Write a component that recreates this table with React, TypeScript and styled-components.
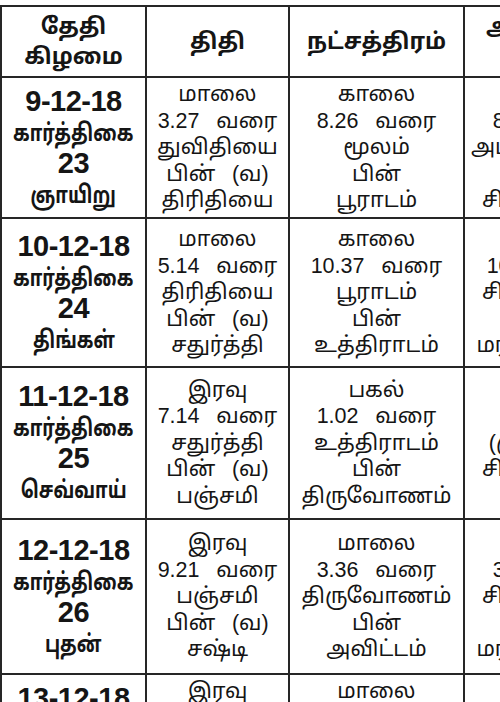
import React from "react";
import styled, { createGlobalStyle } from "styled-components";

const Global = createGlobalStyle`
  html, body { margin: 0; padding: 0; background: #ffffff; }
  body { font-family: "Liberation Sans", "Noto Sans Tamil", "Lohit Tamil", sans-serif; color: #151515; }
`;

const Sheet = styled.div`
  width: 500px;
  height: 702px;
  overflow: hidden;
  padding-top: 5px;
  box-sizing: border-box;
  background: #ffffff;
`;

const Grid = styled.div`
  display: grid;
  grid-template-columns: 143px 141px 173px 175px;
  gap: 2px;
  padding: 2px;
  width: max-content;
  background: #262626;
`;

const Cell = styled.div<{ $h: number }>`
  height: ${(p) => p.$h}px;
  background: #ffffff;
  display: flex;
  flex-direction: column;
  align-items: center;
  justify-content: center;
  text-align: center;
  white-space: nowrap;
  overflow: hidden;
`;

const HeadLine = styled.div`
  font-weight: 700;
  font-size: 22.5px;
  line-height: 30px;
`;

const DateNum = styled.div`
  font-family: "Liberation Sans", sans-serif;
  font-weight: 700;
  font-size: 29px;
  line-height: 31px;
  letter-spacing: -0.5px;
`;

const DateLine = styled.div`
  font-weight: 700;
  font-size: 24px;
  line-height: 31px;
  transform: scaleX(0.76);
`;

const InfoLine = styled.div`
  font-size: 21.5px;
  line-height: 26.5px;
  min-height: 26.5px;
  word-spacing: 0.5em;
`;

type Row = {
  h: number;
  date: [string, string, string, string];
  tithi: string[];
  star: string[];
  yoga: string[];
};

const header: string[][] = [["தேதி", "கிழமை"], ["திதி"], ["நட்சத்திரம்"], ["அமிர்தாதி", "யோகம்"]];

const rows: Row[] = [
  {
    h: 139,
    date: ["9-12-18", "கார்த்திகை", "23", "ஞாயிறு"],
    tithi: ["மாலை", "3.27 வரை", "துவிதியை", "பின் (வ)", "திரிதியை"],
    star: ["காலை", "8.26 வரை", "மூலம்", "பின்", "பூராடம்"],
    yoga: ["காலை", "8.26 வரை", "அமிர்தயோகம்", "பின்", "சித்தயோகம்"],
  },
  {
    h: 147,
    date: ["10-12-18", "கார்த்திகை", "24", "திங்கள்"],
    tithi: ["மாலை", "5.14 வரை", "திரிதியை", "பின் (வ)", "சதுர்த்தி"],
    star: ["காலை", "10.37 வரை", "பூராடம்", "பின்", "உத்திராடம்"],
    yoga: ["காலை", "10.37 வரை", "சித்தயோகம்", "பின்", "மரணயோகம்"],
  },
  {
    h: 150,
    date: ["11-12-18", "கார்த்திகை", "25", "செவ்வாய்"],
    tithi: ["இரவு", "7.14 வரை", "சதுர்த்தி", "பின் (வ)", "பஞ்சமி"],
    star: ["பகல்", "1.02 வரை", "உத்திராடம்", "பின்", "திருவோணம்"],
    yoga: ["நாள்", "முழு", "(முழுவதும்)", "சித்தயோகம்", "உண்டு"],
  },
  {
    h: 153,
    date: ["12-12-18", "கார்த்திகை", "26", "புதன்"],
    tithi: ["இரவு", "9.21 வரை", "பஞ்சமி", "பின் (வ)", "சஷ்டி"],
    star: ["மாலை", "3.36 வரை", "திருவோணம்", "பின்", "அவிட்டம்"],
    yoga: ["மாலை", "3.36 வரை", "சித்தயோகம்", "பின்", "மரணயோகம்"],
  },
  {
    h: 139,
    date: ["13-12-18", "கார்த்திகை", "27", "வியாழன்"],
    tithi: ["இரவு", "11.36 வரை", "சஷ்டி", "பின் (வ)", "சப்தமி"],
    star: ["மாலை", "5.45 வரை", "அவிட்டம்", "பின்", "சதயம்"],
    yoga: ["மாலை", "5.45 வரை", "சித்தயோகம்", "பின்", "அமிர்தயோகம்"],
  },
];

export default function App() {
  return (
    <>
      <Global />
      <Sheet>
        <Grid>
          {header.map((lines, i) => (
            <Cell key={`h${i}`} $h={69}>
              {lines.map((l) => (
                <HeadLine key={l}>{l}</HeadLine>
              ))}
            </Cell>
          ))}
          {rows.map((r, ri) => (
            <React.Fragment key={ri}>
              <Cell $h={r.h}>
                <DateNum>{r.date[0]}</DateNum>
                <DateLine>{r.date[1]}</DateLine>
                <DateNum>{r.date[2]}</DateNum>
                <DateLine>{r.date[3]}</DateLine>
              </Cell>
              {[r.tithi, r.star, r.yoga].map((col, ci) => (
                <Cell key={ci} $h={r.h}>
                  {col.map((l, li) => (
                    <InfoLine key={li}>{l}</InfoLine>
                  ))}
                </Cell>
              ))}
            </React.Fragment>
          ))}
        </Grid>
      </Sheet>
    </>
  );
}
